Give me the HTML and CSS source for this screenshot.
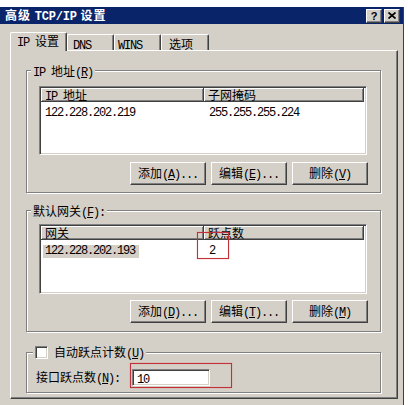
FILE: index.html
```html
<!DOCTYPE html>
<html>
<head>
<meta charset="utf-8">
<link rel="stylesheet" href="styles.css">
</head>
<body>
<div class="window">
  <div class="titlebar">
    <span class="title">高级 <span class="a">TCP/IP</span> 设置</span>
    <div class="tbtns">
      <span class="tbtn help">?</span>
      <span class="tbtn"><svg width="8" height="7" viewBox="0 0 8 7"><path d="M0.5 0.5 L7.5 6.5 M7.5 0.5 L0.5 6.5" stroke="#000" stroke-width="1.7" fill="none"/></svg></span>
    </div>
  </div>
  <div class="client">
    <div class="tabs">
      <div class="tab sel"><span class="a">IP </span>设置</div>
      <div class="tab t-dns"><span class="a">DNS</span></div>
      <div class="tab t-wins"><span class="a">WINS</span></div>
      <div class="tab t-opt">选项</div>
    </div>
    <div class="panel">
      <fieldset class="group g1">
        <legend><span class="a">IP </span>地址<span class="a">(<u>R</u>)</span></legend>
        <div class="gbody">
          <div class="list l1">
            <div class="lhead">
              <div class="c1"><span class="a">IP </span>地址</div>
              <div class="c2">子网掩码</div>
            </div>
            <div class="lrow">
              <div class="c1"><span class="a cell">122.228.202.219</span></div>
              <div class="c2"><span class="a">255.255.255.224</span></div>
            </div>
          </div>
          <div class="btns">
            <button class="btn">添加<span class="a">(<u>A</u>)...</span></button>
            <button class="btn">编辑<span class="a">(<u>E</u>)...</span></button>
            <button class="btn">删除<span class="a">(<u>V</u>)</span></button>
          </div>
        </div>
      </fieldset>
      <fieldset class="group g2">
        <legend>默认网关<span class="a">(<u>F</u>):</span></legend>
        <div class="gbody">
          <div class="list l2">
            <div class="lhead">
              <div class="c1">网关</div>
              <div class="c2">跃点数</div>
            </div>
            <div class="lrow">
              <div class="c1"><span class="a cell selrow">122.228.202.193</span></div>
              <div class="c2"><span class="a">2</span></div>
            </div>
          </div>
          <div class="btns">
            <button class="btn">添加<span class="a">(<u>D</u>)...</span></button>
            <button class="btn">编辑<span class="a">(<u>T</u>)...</span></button>
            <button class="btn">删除<span class="a">(<u>M</u>)</span></button>
          </div>
        </div>
      </fieldset>
      <fieldset class="group g3">
        <legend class="chklegend"><span class="chk"></span><span>自动跃点计数<span class="a">(<u>U</u>)</span></span></legend>
        <div class="gbody row3">
          <span class="lbl">接口跃点数<span class="a">(<u>N</u>):</span></span>
          <div class="input"><span class="a">10</span></div>
        </div>
      </fieldset>
    </div>
  </div>
  <div class="mark m1"></div>
  <div class="mark m2"></div>
</div>
</body>
</html>
```

FILE: styles.css
```css
* { box-sizing: border-box; }
body {
  margin: 0;
  background: #fff;
  font: 12px/14px "Noto Sans CJK SC", "Noto Sans CJK JP", sans-serif;
  color: #000;
}
.a {
  font-family: "Liberation Mono", "Noto Sans CJK SC", monospace;
  letter-spacing: -1.2px;
}
u { text-decoration: underline; text-underline-offset: 1px; }

.window {
  position: relative;
  width: 404px;
  height: 398px;
  margin-top: 7px;
  background: #d4d0c8;
  border-right: 1px solid #404040;
}
.titlebar {
  height: 17px;
  background: #0a246a;
  display: flex;
  align-items: center;
  justify-content: space-between;
  padding: 0 3px 0 5px;
}
.title {
  color: #fff;
  font-weight: bold;
  letter-spacing: 1px;
  line-height: 14px;
}
.title .a { letter-spacing: -0.2px; }
.tbtns { display: flex; gap: 2px; }
.tbtn {
  width: 16px;
  height: 14px;
  background: #d4d0c8;
  border: 1px solid;
  border-color: #fff #404040 #404040 #fff;
  box-shadow: inset -1px -1px 0 #808080;
  display: flex;
  align-items: center;
  justify-content: center;
}
.help {
  font: bold 11px/12px "Liberation Sans", sans-serif;
  color: #000;
}

.client { padding: 8px 0 0 10px; }
.tabs {
  display: flex;
  align-items: flex-end;
  height: 18px;
  position: relative;
  z-index: 1;
}
.tab {
  height: 16px;
  border-left: 1px solid #fff;
  border-top: 1px solid #fff;
  border-right: 1px solid #404040;
  border-radius: 2px 2px 0 0;
  box-shadow: inset -1px 0 0 #808080;
  padding-top: 2px;
  line-height: 13px;
  background: #d4d0c8;
}
.tab.sel {
  width: 57px;
  height: 19px;
  margin-bottom: -1px;
  padding-top: 1px;
  padding-left: 6px;
}
.t-dns { width: 47px; padding-left: 5px; }
.t-wins { width: 47px; padding-left: 3px; }
.t-opt { width: 48px; padding-left: 7px; }

.panel {
  width: 388px;
  height: 349px;
  border: 1px solid;
  border-color: #fff #404040 #404040 #fff;
  box-shadow: inset -1px -1px 0 #808080;
  padding: 12px 0 0 15px;
}
.group {
  width: 355px;
  margin: 0;
  padding: 0;
  min-inline-size: 0;
  border: 1px solid #808080;
  box-shadow: inset 1px 1px 0 #fff, 1px 1px 0 #fff;
}
.group legend {
  padding: 0 2px;
  margin-left: 4px;
  height: 15px;
  line-height: 15px;
  background: #d4d0c8;
}
.g2 { margin-top: 10px; }
.g3 { margin-top: 13px; }
.gbody { padding: 8px 13px 7px 12px; }
.g2 .gbody { padding: 6px 13px 8px 12px; }

.list {
  background: #fff;
  border: 1px solid;
  border-color: #808080 #fff #fff #808080;
  box-shadow: inset 1px 1px 0 #404040, inset -1px -1px 0 #d4d0c8;
  padding: 1px 2px 2px 1px;
}
.l1 { height: 69px; }
.l2 { height: 70px; }
.lhead { display: flex; height: 14px; }
.lhead > div {
  background: #d4d0c8;
  border-right: 1px solid #404040;
  border-bottom: 1px solid #404040;
  box-shadow: inset 1px 1px 0 #fff, inset -1px -1px 0 #808080;
  line-height: 13px;
}
.lhead .c1 { width: 163px; padding-left: 4px; }
.lhead .c2 { flex: 1; padding-left: 4px; }
.lrow { display: flex; height: 13px; margin-top: 2px; line-height: 13px; }
.lrow .c1 { width: 163px; padding-left: 2px; }
.lrow .c2 { padding-left: 5px; }
.cell { display: inline-block; padding: 0 4px 0 2px; }
.selrow { background: #d4d0c8; }

.btns {
  display: flex;
  justify-content: flex-end;
  gap: 5px;
  margin-top: 7px;
  margin-right: -1px;
}
.g2 .btns { margin-top: 6px; }
.btn {
  width: 76px;
  height: 23px;
  padding: 0;
  font: inherit;
  color: #000;
  background: #d4d0c8;
  border: 1px solid;
  border-color: #fff #404040 #404040 #fff;
  box-shadow: inset -1px -1px 0 #808080;
}

.chklegend { margin-left: 6px !important; display: flex; align-items: center; gap: 6px; }
.chk {
  width: 13px;
  height: 13px;
  background: #fff;
  border: 1px solid;
  border-color: #808080 #fff #fff #808080;
  box-shadow: inset 1px 1px 0 #404040, inset -1px -1px 0 #d4d0c8;
}
.row3 {
  display: flex;
  align-items: center;
  padding: 9px 0 6px 9px;
}
.lbl { width: 96px; }
.input {
  width: 78px;
  height: 17px;
  background: #fff;
  border: 1px solid;
  border-color: #808080 #fff #fff #808080;
  box-shadow: inset 1px 1px 0 #404040, inset -1px -1px 0 #d4d0c8;
  padding-left: 4px;
  line-height: 15px;
}

.mark {
  position: absolute;
  border: 1px solid #c2303a;
  box-shadow: 0 0 1px rgba(220, 90, 90, 0.7), inset 0 0 1px rgba(220, 90, 90, 0.5);
}
.m1 { left: 197px; top: 225px; width: 32px; height: 27px; }
.m2 { left: 130px; top: 356px; width: 102px; height: 25px; }
```
